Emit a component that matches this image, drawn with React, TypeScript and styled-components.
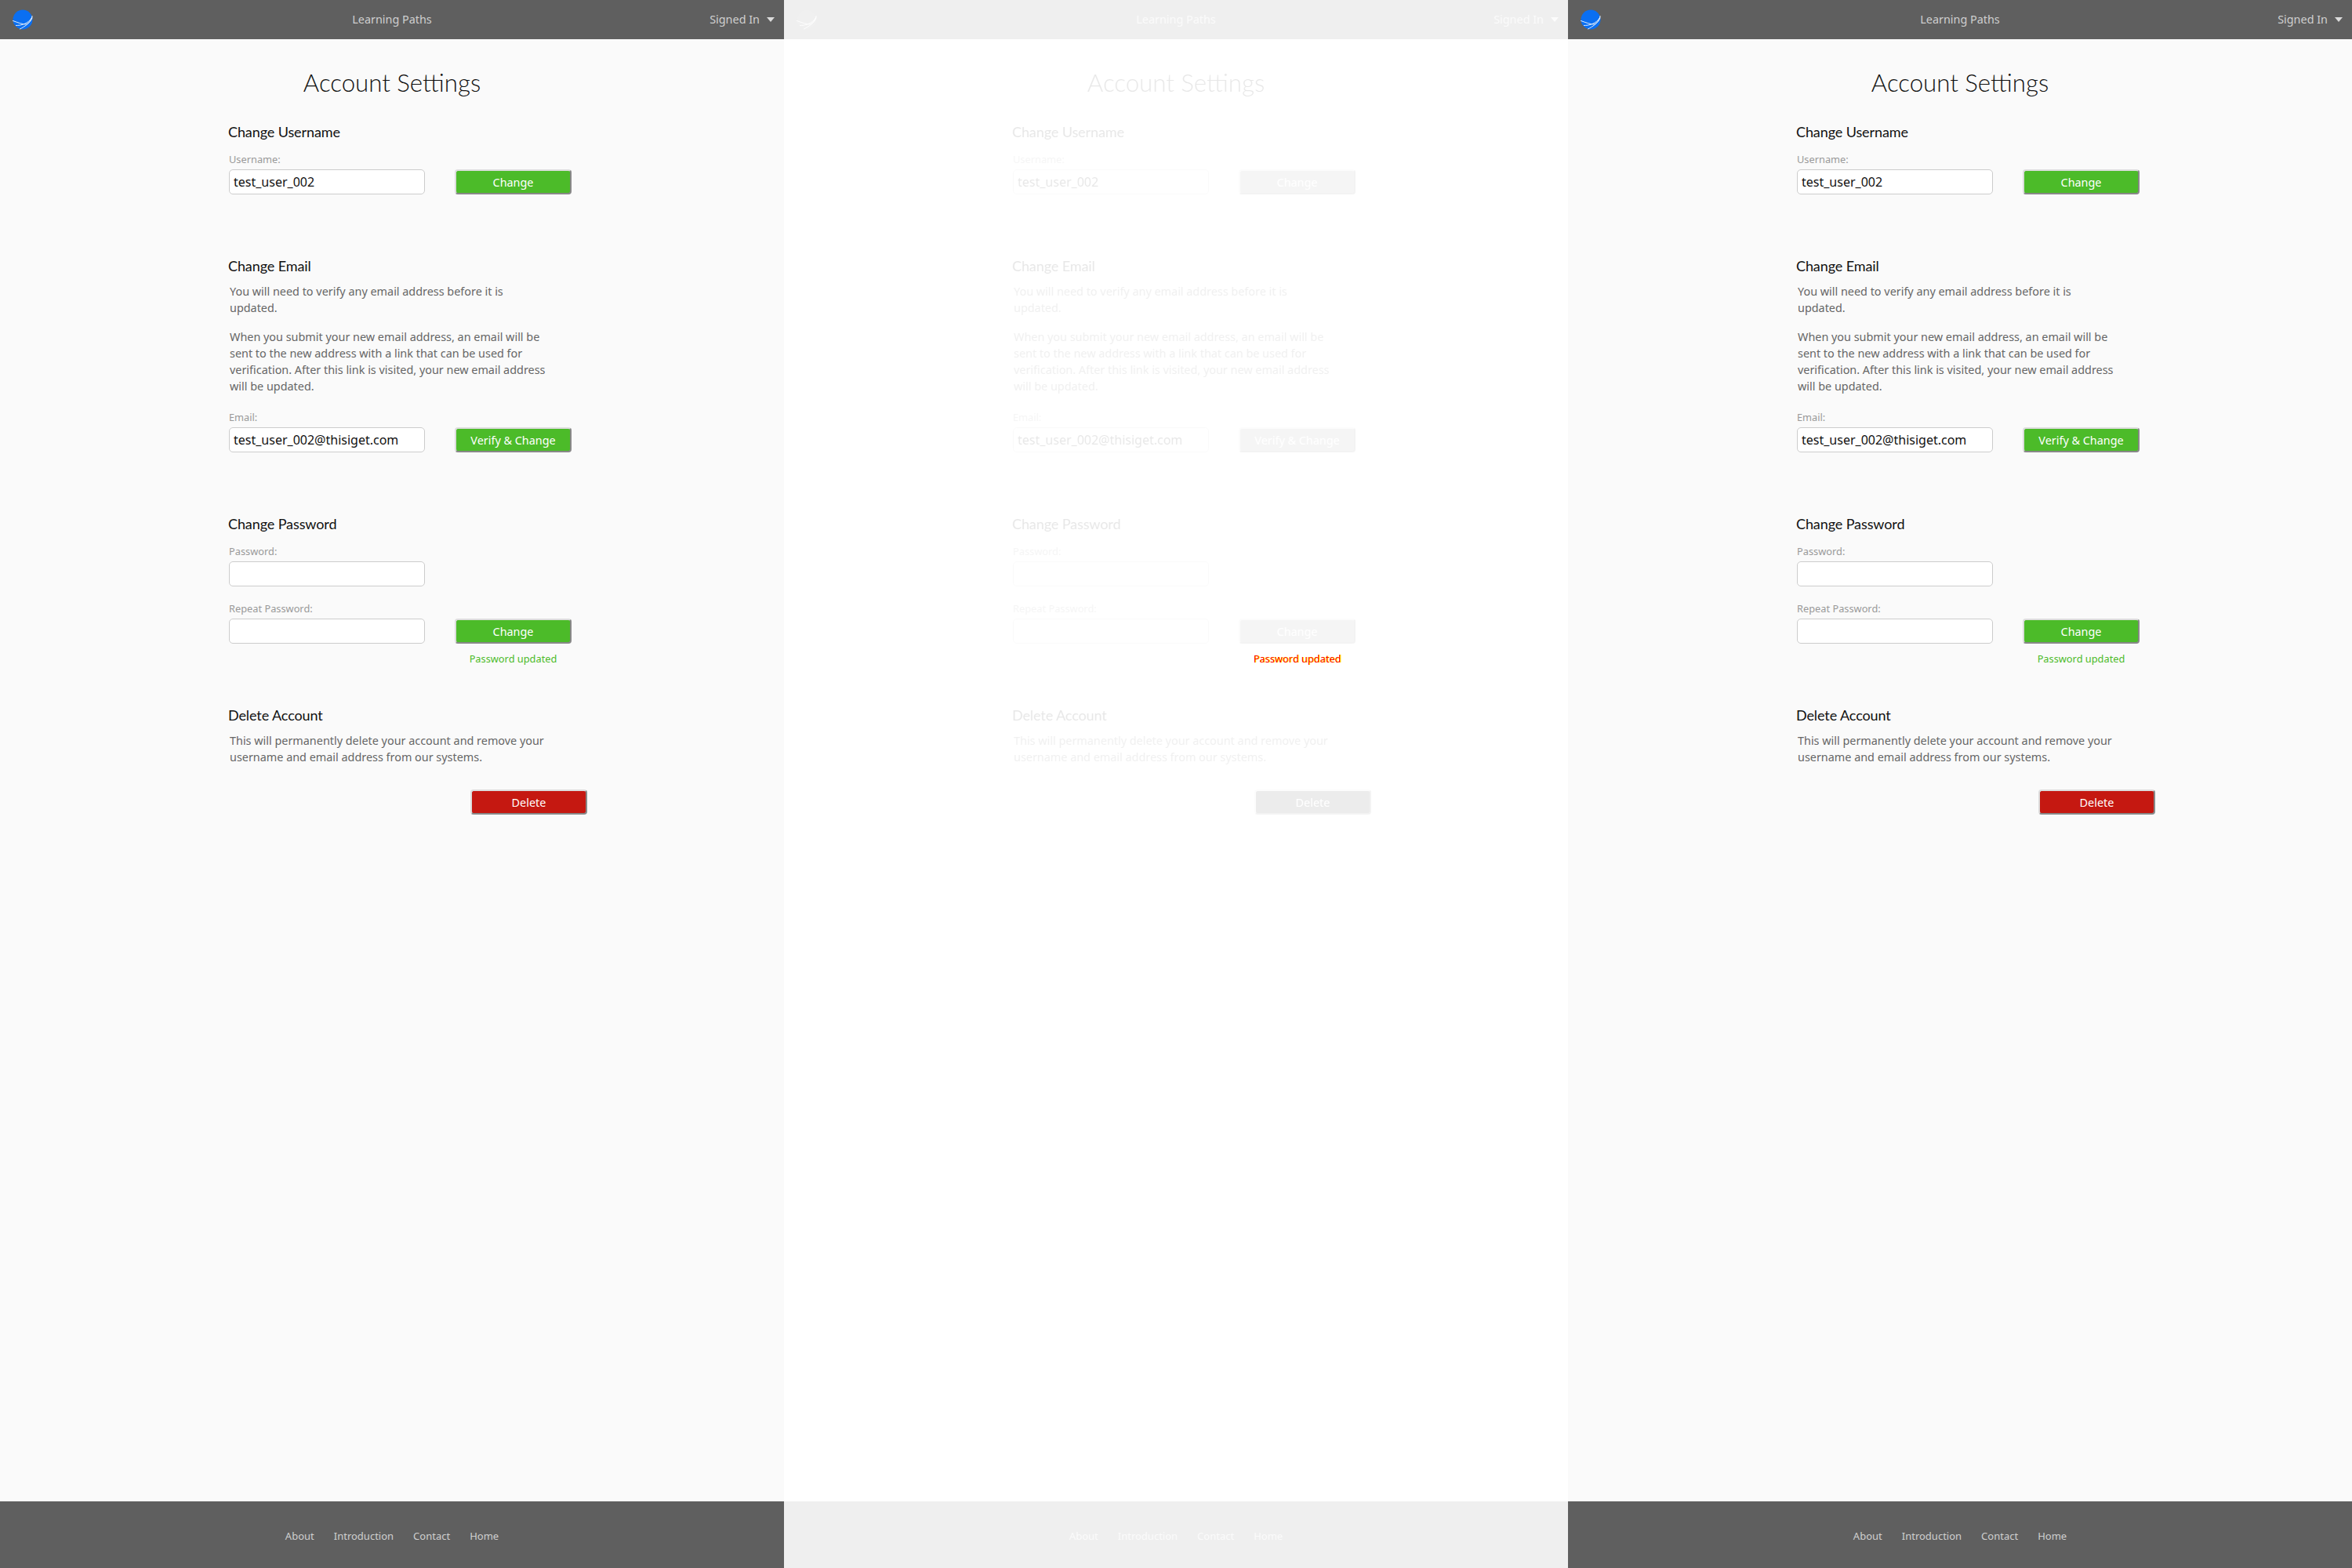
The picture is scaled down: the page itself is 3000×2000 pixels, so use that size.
import React from "react";
import styled, { createGlobalStyle } from "styled-components";

const Global = createGlobalStyle`
  html, body { margin: 0; padding: 0; background: #fff; }
  * { box-sizing: border-box; }
`;

const Row3 = styled.div`
  display: flex;
  width: 3000px;
  height: 2000px;
  overflow: hidden;
`;

const Panel = styled.div<{ $veiled?: boolean }>`
  position: relative;
  width: 1000px;
  height: 2000px;
  flex: none;
  display: flex;
  flex-direction: column;
  background: #fafafa;
  font-family: "Noto Sans", sans-serif;
  ${(p) =>
    p.$veiled &&
    `&::after {
      content: "";
      position: absolute;
      inset: 0;
      background: rgba(255, 255, 255, 0.9);
      backdrop-filter: grayscale(1);
      z-index: 1;
    }`}
`;

const Header = styled.header`
  height: 50px;
  flex: none;
  background: #5f5f5f;
  display: grid;
  grid-template-columns: 1fr auto 1fr;
  align-items: center;
  padding: 0 12px;
  color: #cfcfcf;
  font-size: 14.4px;
`;

const LogoBox = styled.div`
  display: flex;
  align-items: center;
  padding-left: 4px;
`;

const HeaderTitle = styled.div`
  line-height: 20px;
`;

const Account = styled.div`
  display: flex;
  justify-content: flex-end;
  align-items: center;
  gap: 9px;
  line-height: 20px;
`;

const Caret = styled.span`
  width: 0;
  height: 0;
  border-left: 5px solid transparent;
  border-right: 5px solid transparent;
  border-top: 6px solid #dcdcdc;
`;

const Main = styled.main`
  flex: 1;
  width: 500px;
  margin: 0 auto;
  padding: 30px 1px 0 41px;
`;

const Title = styled.h1`
  margin: 0 0 0 -41px;
  width: 500px;
  text-align: center;
  font-family: Lato, sans-serif;
  font-weight: 300;
  font-size: 31.2px;
  line-height: 50px;
  color: #111;
`;

const Section = styled.section<{ $top: number }>`
  margin-top: ${(p) => p.$top}px;
`;

const Heading = styled.h2`
  margin: 0;
  font-family: Lato, sans-serif;
  font-weight: 400;
  font-size: 18px;
  letter-spacing: -0.1px;
  line-height: 24px;
  color: #111;
`;

const Para = styled.p<{ $top: number }>`
  margin: ${(p) => p.$top}px 0 0 2px;
  max-width: 410px;
  font-size: 14.4px;
  line-height: 21px;
  color: #666;
`;

const Field = styled.label<{ $top: number }>`
  display: block;
  margin: ${(p) => p.$top}px 0 0 1px;
  font-size: 12.8px;
  line-height: 16px;
  color: #999;
`;

const FieldRow = styled.div`
  display: flex;
  align-items: flex-start;
  gap: 38px;
  margin: 5px 0 0 1px;
`;

const Input = styled.input`
  display: block;
  width: 250px;
  height: 32px;
  padding: 0 5px;
  border: 1px solid #ccc;
  border-radius: 5px;
  background: #fff;
  font-family: "Noto Sans", sans-serif;
  font-size: 16px;
  color: #111;
  outline: none;
`;

const ButtonColumn = styled.div`
  display: flex;
  flex-direction: column;
  align-items: center;
  width: 149px;
`;

const Button = styled.button<{ $danger?: boolean }>`
  width: 149px;
  height: 32px;
  padding: 0;
  border-style: solid;
  border-width: 2px;
  border-color: #ddd #888 #888 #ddd;
  border-radius: 4px;
  background: ${(p) => (p.$danger ? "#c51811" : "#4cbb29")};
  color: #fff;
  font-family: "Noto Sans", sans-serif;
  font-size: 14.4px;
`;

const DeleteRow = styled.div`
  display: flex;
  justify-content: flex-end;
  margin-top: 31px;
`;

const Status = styled.div<{ $diff?: boolean }>`
  position: relative;
  z-index: 2;
  margin-top: 11px;
  font-size: 12.8px;
  line-height: 16px;
  white-space: nowrap;
  color: ${(p) => (p.$diff ? "#f00" : "#4cbb29")};
  ${(p) => p.$diff && "text-shadow: 1px 0 0 #ff0;"}
`;

const Footer = styled.footer`
  height: 85px;
  flex: none;
  background: #5f5f5f;
  display: flex;
  justify-content: center;
  gap: 25px;
  padding-top: 34px;
  font-size: 13px;
  line-height: 20px;
  color: #cfcfcf;
`;

const FooterLink = styled.a`
  color: inherit;
  text-decoration: none;
`;

function Logo() {
  return (
    <svg width="26" height="26" viewBox="0 0 26 26">
      <circle cx="13" cy="13" r="12.5" fill="#0a6ff2" />
      <g fill="none" stroke="#e4edf8" strokeWidth="1" strokeLinecap="round">
        <path d="M0.5 14.5 C7 17 13 19 17 19 C21 18 24 14 25 8.5" />
        <path d="M4.5 20.5 C10 20.5 20 19 25 10" />
        <path d="M9.5 25 C15 22 22 18 25 11" />
      </g>
    </svg>
  );
}

function Page({ diff }: { diff?: boolean }) {
  return (
    <Panel $veiled={diff}>
      <Header>
        <LogoBox>
          <Logo />
        </LogoBox>
        <HeaderTitle>Learning Paths</HeaderTitle>
        <Account>
          Signed In
          <Caret />
        </Account>
      </Header>
      <Main>
        <Title>Account Settings</Title>

        <Section $top={26}>
          <Heading>Change Username</Heading>
          <Field $top={15}>Username:</Field>
          <FieldRow>
            <Input defaultValue="test_user_002" />
            <Button>Change</Button>
          </FieldRow>
        </Section>

        <Section $top={79}>
          <Heading>Change Email</Heading>
          <Para $top={10}>
            You will need to verify any email address before it is updated.
          </Para>
          <Para $top={16}>
            When you submit your new email address, an email will be sent to the
            new address with a link that can be used for verification. After this
            link is visited, your new email address will be updated.
          </Para>
          <Field $top={21}>Email:</Field>
          <FieldRow>
            <Input defaultValue="test_user_002@thisiget.com" />
            <Button>Verify &amp; Change</Button>
          </FieldRow>
        </Section>

        <Section $top={79}>
          <Heading>Change Password</Heading>
          <Field $top={15}>Password:</Field>
          <FieldRow>
            <Input type="password" />
          </FieldRow>
          <Field $top={20}>Repeat Password:</Field>
          <FieldRow>
            <Input type="password" />
            <ButtonColumn>
              <Button>Change</Button>
              <Status $diff={diff}>Password updated</Status>
            </ButtonColumn>
          </FieldRow>
        </Section>

        <Section $top={52}>
          <Heading>Delete Account</Heading>
          <Para $top={10}>
            This will permanently delete your account and remove your username
            and email address from our systems.
          </Para>
          <DeleteRow>
            <Button $danger>Delete</Button>
          </DeleteRow>
        </Section>
      </Main>
      <Footer>
        <FooterLink>About</FooterLink>
        <FooterLink>Introduction</FooterLink>
        <FooterLink>Contact</FooterLink>
        <FooterLink>Home</FooterLink>
      </Footer>
    </Panel>
  );
}

export default function App() {
  return (
    <>
      <Global />
      <Row3>
        <Page />
        <Page diff />
        <Page />
      </Row3>
    </>
  );
}
